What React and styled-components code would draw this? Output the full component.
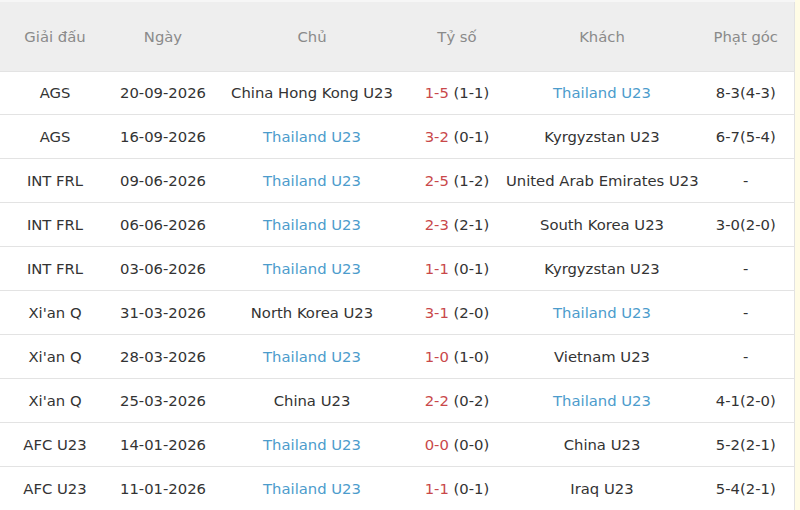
import React from "react";
import styled, { createGlobalStyle } from "styled-components";

const Global = createGlobalStyle`
  html, body { margin: 0; padding: 0; background: #fff; }
  body { font-family: "DejaVu Sans", Tahoma, sans-serif; }
`;

const Page = styled.div`
  display: flex;
  width: 800px;
  height: 510px;
  overflow: hidden;
  background: #fffce6;
`;

const Table = styled.table`
  width: 794px;
  flex: none;
  border-collapse: collapse;
  table-layout: fixed;
  background: #fff;
  border-right: 1px solid #e2e2e2;
`;

const HeadRow = styled.tr`
  height: 70px;
  background: #eeeeee;
  border-top: 2px solid #f6f6f6;
`;

const Th = styled.th`
  font-weight: normal;
  font-size: 14.8px;
  color: #8a8a8a;
  text-align: center;
  padding: 1px 0 0;
  white-space: nowrap;
`;

const Row = styled.tr`
  height: 43.8px;
  border-top: 1px solid #e3e3e3;
`;

const Td = styled.td`
  font-size: 14.8px;
  color: #333;
  text-align: center;
  padding: 0;
  white-space: nowrap;
`;

const Team = styled.span`
  color: ${(p) => (p.$hl ? "#4c9ccc" : "#333")};
`;

const Score = styled.span`
  color: #c9484a;
`;

const rows = [
  ["AGS", "20-09-2026", "China Hong Kong U23", "1-5", "(1-1)", "Thailand U23", "8-3(4-3)", "a"],
  ["AGS", "16-09-2026", "Thailand U23", "3-2", "(0-1)", "Kyrgyzstan U23", "6-7(5-4)", "h"],
  ["INT FRL", "09-06-2026", "Thailand U23", "2-5", "(1-2)", "United Arab Emirates U23", "-", "h"],
  ["INT FRL", "06-06-2026", "Thailand U23", "2-3", "(2-1)", "South Korea U23", "3-0(2-0)", "h"],
  ["INT FRL", "03-06-2026", "Thailand U23", "1-1", "(0-1)", "Kyrgyzstan U23", "-", "h"],
  ["Xi'an Q", "31-03-2026", "North Korea U23", "3-1", "(2-0)", "Thailand U23", "-", "a"],
  ["Xi'an Q", "28-03-2026", "Thailand U23", "1-0", "(1-0)", "Vietnam U23", "-", "h"],
  ["Xi'an Q", "25-03-2026", "China U23", "2-2", "(0-2)", "Thailand U23", "4-1(2-0)", "a"],
  ["AFC U23", "14-01-2026", "Thailand U23", "0-0", "(0-0)", "China U23", "5-2(2-1)", "h"],
  ["AFC U23", "11-01-2026", "Thailand U23", "1-1", "(0-1)", "Iraq U23", "5-4(2-1)", "h"],
];

const widths = [110, 106, 192, 98, 192, 96];

export default function App() {
  return (
    <>
      <Global />
      <Page>
        <Table>
          <colgroup>
            {widths.map((w, i) => (
              <col key={i} style={{ width: w }} />
            ))}
          </colgroup>
          <thead>
            <HeadRow>
              <Th>Giải đấu</Th>
              <Th>Ngày</Th>
              <Th>Chủ</Th>
              <Th>Tỷ số</Th>
              <Th>Khách</Th>
              <Th>Phạt góc</Th>
            </HeadRow>
          </thead>
          <tbody>
            {rows.map((r, i) => (
              <Row key={i}>
                <Td>{r[0]}</Td>
                <Td>{r[1]}</Td>
                <Td>
                  <Team $hl={r[7] === "h"}>{r[2]}</Team>
                </Td>
                <Td>
                  <Score>{r[3]}</Score> {r[4]}
                </Td>
                <Td>
                  <Team $hl={r[7] === "a"}>{r[5]}</Team>
                </Td>
                <Td>{r[6]}</Td>
              </Row>
            ))}
          </tbody>
        </Table>
      </Page>
    </>
  );
}
